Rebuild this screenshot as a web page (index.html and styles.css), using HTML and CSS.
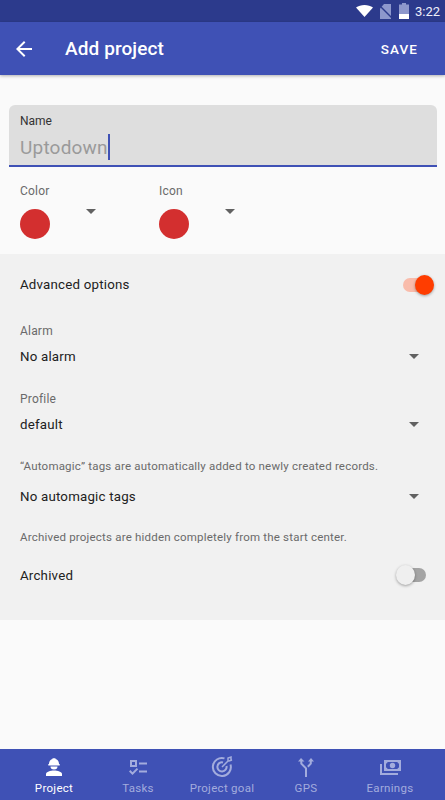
FILE: index.html
```html
<!DOCTYPE html>
<html lang="en">
<head>
  <meta charset="UTF-8" />
  <meta name="viewport" content="width=device-width, initial-scale=1" />
  <title>Add project</title>
  <link rel="stylesheet" href="styles.css">
</head>
<body>
<div class="screen">
  <div class="status-bar">
    <svg class="wifi" width="17" height="12" viewBox="0 0 17 12"><path d="M0 2.500C2.300.9 5.200 0 8.500 0s6.200.9 8.500 2.500L8.500 12z" fill="#fff"/></svg>
    <svg class="sim" width="13" height="15" viewBox="0 0 13 15"><path d="M1 15V4.500L5 0h7v15z" fill="#8d97cc"/><path d="M0 1l13 13" stroke="#2c3a8c" stroke-width="1.500"/></svg>
    <svg class="battery" width="10" height="16" viewBox="0 0 10 16"><path d="M3 0h4v1.500h3V16H0V1.500h3z" fill="#8d97cc"/><rect y="11" width="10" height="5" fill="#fff"/></svg>
    <span class="clock">3:22</span>
  </div>

  <div class="app-bar">
    <svg class="back" width="16" height="16" viewBox="0 0 16 16"><path d="M16 7H3.800l5.600-5.600L8 0 0 8l8 8 1.400-1.400L3.800 9H16z" fill="#fff"/></svg>
    <div class="app-title">Add project</div>
    <div class="save">SAVE</div>
  </div>

  <div class="content">
    <div class="name-field">
      <div class="name-label">Name</div>
      <div class="name-input">Uptodown<span class="caret"></span></div>
    </div>

    <div class="pickers">
      <div class="picker">
        <div class="small-label">Color</div>
        <div class="picker-row">
          <span class="dot"></span>
          <span class="arrow picker-arrow"></span>
        </div>
      </div>
      <div class="picker">
        <div class="small-label">Icon</div>
        <div class="picker-row">
          <span class="dot"></span>
          <span class="arrow picker-arrow"></span>
        </div>
      </div>
    </div>

    <div class="advanced">
      <div class="row switch-row">
        <span class="row-text">Advanced options</span>
        <span class="switch on"><span class="thumb"></span></span>
      </div>

      <div class="small-label alarm-label">Alarm</div>
      <div class="row select-row">
        <span class="row-text">No alarm</span>
        <span class="arrow"></span>
      </div>

      <div class="small-label profile-label">Profile</div>
      <div class="row select-row">
        <span class="row-text">default</span>
        <span class="arrow"></span>
      </div>

      <div class="small-label tags-label">“Automagic” tags are automatically added to newly created records.</div>
      <div class="row select-row">
        <span class="row-text">No automagic tags</span>
        <span class="arrow"></span>
      </div>

      <div class="small-label archived-label">Archived projects are hidden completely from the start center.</div>
      <div class="row switch-row archived-row">
        <span class="row-text">Archived</span>
        <span class="switch off"><span class="thumb"></span></span>
      </div>
    </div>
  </div>

  <nav class="bottom-nav">
    <div class="nav-item active">
      <svg width="24" height="24" viewBox="0 0 24 24"><path d="M7 9c0-3 1.700-4.500 3.500-5v-.7h3V4c1.800.5 3.500 2 3.500 5h.7v1.400H6.300V9z" fill="currentColor"/><path d="M8.500 11.500h7a3.500 3 0 0 1-7 0z" fill="currentColor"/><path d="M12 15.500c-3.500 0-8 1.500-8 3.500v2h16v-2c0-2-4.500-3.500-8-3.500z" fill="currentColor"/></svg>
      <span>Project</span>
    </div>
    <div class="nav-item">
      <svg width="24" height="24" viewBox="0 0 24 24"><path d="M4 5h7v7H4zm2 2v3h3V7z" fill="currentColor" fill-rule="evenodd"/><path d="M13 7.500h8v2h-8zM13 15.500h8v2h-8z" fill="currentColor"/><path d="M3 16.500l1.400-1.400 2.100 2.100 4.300-4.300 1.400 1.400-5.700 5.700z" fill="currentColor"/></svg>
      <span>Tasks</span>
    </div>
    <div class="nav-item">
      <svg width="24" height="24" viewBox="0 0 24 24" fill="none" stroke="currentColor" stroke-width="2"><path d="M20.500 9.500A9 9 0 1 1 14.500 3.400"/><path d="M16.500 11a4.600 4.600 0 1 1-3.500-3.600"/><path d="M12 12l6-6M18 6V3l3-1v3l1 0-3 1z" stroke-width="1.500"/></svg>
      <span>Project goal</span>
    </div>
    <div class="nav-item">
      <svg width="24" height="24" viewBox="0 0 24 24"><path d="M7 3l3.500 3.500H8.300v1.800L13 13v9h-2v-8.200L6.300 9.100V6.500H4z" fill="currentColor"/><path d="M17 3l3 3.500h-2.200v2.600l-3.300 3.300-1.400-1.400 2.700-2.700V6.500H14z" fill="currentColor"/></svg>
      <span>GPS</span>
    </div>
    <div class="nav-item">
      <svg width="24" height="24" viewBox="0 0 24 24"><path d="M6 5h17v11H6zm3.500 2A1.500 1.500 0 0 1 8 8.500v4A1.500 1.500 0 0 1 9.500 14h10a1.500 1.500 0 0 1 1.500-1.500v-4A1.500 1.500 0 0 1 19.500 7z" fill="currentColor" fill-rule="evenodd"/><circle cx="14.500" cy="10.500" r="2.700" fill="currentColor"/><path d="M2 9h2v9h16v2H2z" fill="currentColor"/></svg>
      <span>Earnings</span>
    </div>
  </nav>
</div>
</body>
</html>
```

FILE: styles.css
```css
* {
  box-sizing: border-box;
}

html, body {
  margin: 0;
  height: 100%;
}

body {
  font-family: Roboto, "Liberation Sans", sans-serif;
  background: #fafafa;
  color: #212121;
}

.screen {
  display: flex;
  flex-direction: column;
  height: 800px;
  overflow: hidden;
}

.status-bar {
  display: flex;
  align-items: center;
  justify-content: flex-end;
  height: 22px;
  padding-right: 5px;
  background: #2c3a8c;
  color: #fff;
  flex: none;
}

.wifi {
  margin-right: 6px;
}

.sim {
  margin-right: 7px;
}

.battery {
  margin-right: 6px;
}

.clock {
  font-size: 13px;
  color: #eef0fa;
}

.app-bar {
  display: flex;
  align-items: center;
  height: 53px;
  padding: 0 27px 0 16px;
  background: #3f51b5;
  color: #fff;
  box-shadow: 0 1px 3px rgba(0, 0, 0, 0.3);
  flex: none;
  position: relative;
}

.app-title {
  margin-left: 33px;
  font-size: 19px;
  font-weight: 500;
  letter-spacing: 0.1px;
  flex: 1;
}

.save {
  font-size: 13.5px;
  font-weight: 500;
  letter-spacing: 1.1px;
}

.content {
  flex: 1;
  padding-top: 30px;
}

.name-field {
  margin: 0 8px 0 9px;
  height: 62px;
  padding: 9px 11px 0;
  background: #dedede;
  border-radius: 6px 6px 0 0;
  border-bottom: 2px solid #3f51b5;
}

.name-label {
  font-size: 12px;
  line-height: 14px;
  color: #333;
}

.name-input {
  display: flex;
  align-items: center;
  margin-top: 6px;
  height: 26px;
  font-size: 19px;
  letter-spacing: 0.2px;
  color: #9a9a9a;
}

.caret {
  width: 2px;
  height: 26px;
  background: #3f51b5;
}

.pickers {
  display: flex;
  padding: 16px 0 0 20px;
  height: 87px;
}

.picker {
  width: 139px;
}

.small-label {
  font-size: 12px;
  line-height: 16px;
  letter-spacing: 0.2px;
  color: #6a6a6a;
}

.picker-row {
  display: flex;
  align-items: flex-start;
  margin-top: 10px;
}

.dot {
  width: 30px;
  height: 30px;
  border-radius: 50%;
  background: #d32f2f;
}

.arrow {
  width: 0;
  height: 0;
  border-left: 5px solid transparent;
  border-right: 5px solid transparent;
  border-top: 5px solid #616161;
}

.picker-arrow {
  margin: 0 0 0 36px;
}

.advanced {
  height: 366px;
  padding: 0 18px 0 20px;
  background: #f1f1f1;
}

.row {
  display: flex;
  align-items: center;
  justify-content: space-between;
}

.row-text {
  font-size: 13.3px;
  letter-spacing: 0.2px;
  color: #212121;
}

.switch-row {
  height: 61px;
}

.select-row {
  height: 24px;
  margin-top: 5px;
  padding-right: 8px;
}

.alarm-label {
  margin-top: 8px;
}

.profile-label {
  margin-top: 23px;
}

.tags-label {
  margin-top: 22px;
  font-size: 11.5px;
}

.tags-label + .select-row {
  margin-top: 10px;
}

.archived-label {
  margin-top: 21px;
  font-size: 11.5px;
}

.archived-row {
  height: 60px;
}

.switch {
  display: block;
  position: relative;
  width: 24px;
  height: 14px;
  border-radius: 7px;
}

.switch .thumb {
  position: absolute;
  top: -3px;
  width: 19px;
  height: 20px;
  border-radius: 50%;
  box-shadow: 0 1px 3px rgba(0, 0, 0, 0.35);
}

.switch.on {
  background: #f9bcab;
}

.switch.on .thumb {
  left: 12px;
  background: #ff3d00;
}

.switch.off {
  background: #a4a4a4;
  margin-right: 1px;
}

.switch.off .thumb {
  left: -6px;
  background: #efefef;
}

.bottom-nav {
  display: flex;
  height: 51px;
  padding: 0 13px 0 12px;
  background: #3f51b5;
  color: #a3acdd;
  flex: none;
}

.nav-item {
  display: flex;
  flex-direction: column;
  align-items: center;
  flex: 1;
  padding-top: 6px;
  font-size: 11.5px;
  letter-spacing: 0.3px;
}

.nav-item svg {
  display: block;
  margin-bottom: 2px;
}

.nav-item.active {
  color: #fff;
}
```
